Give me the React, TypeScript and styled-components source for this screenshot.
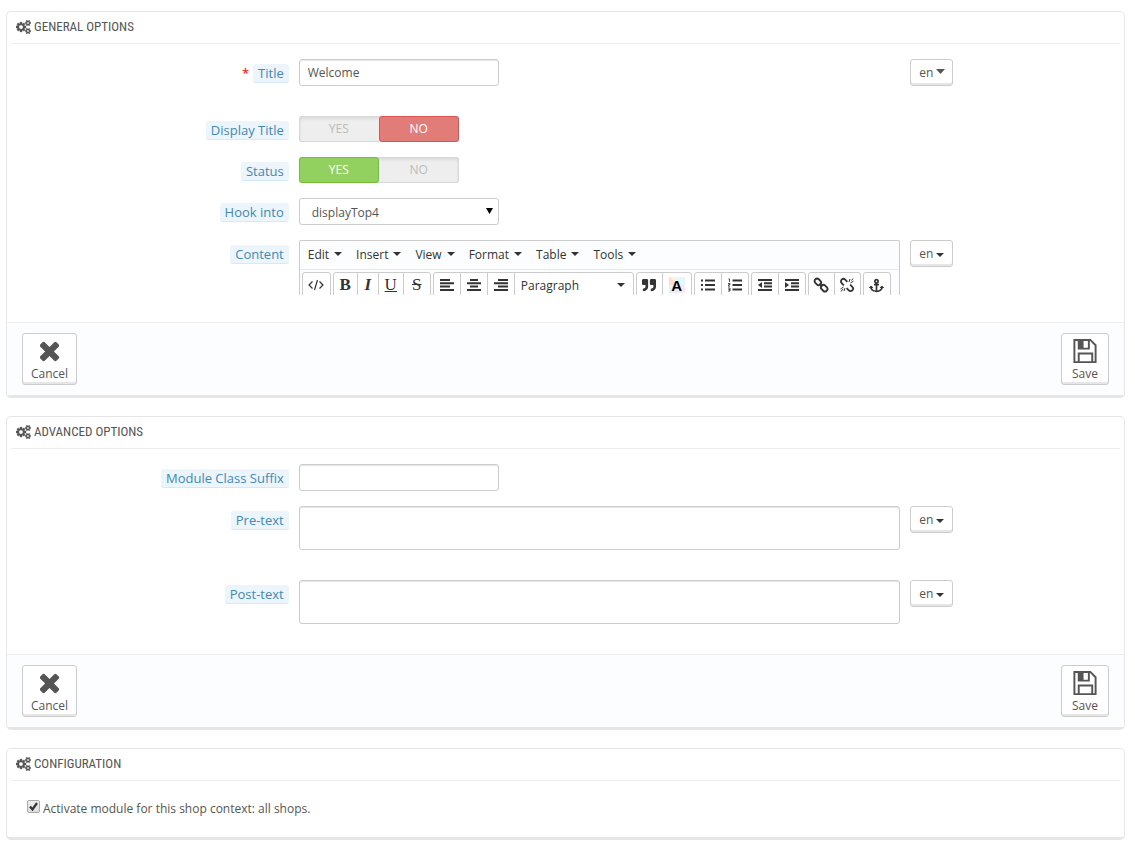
import React, { useState } from "react";
import styled, { createGlobalStyle, css } from "styled-components";
import { FaAnchor, FaQuoteRight } from "react-icons/fa";

const GlobalStyle = createGlobalStyle`
  *, *::before, *::after { box-sizing: border-box; }
  body {
    margin: 0;
    background: #fff;
    color: #555;
    font: 12px/17px "Open Sans", "Noto Sans", sans-serif;
  }
  button, input, select, textarea { font: inherit; color: inherit; margin: 0; }
`;

const Page = styled.main`
  display: flex;
  flex-direction: column;
  gap: 18px;
  padding: 11px 10px 8px 6px;
`;

const Panel = styled.section`
  border: 1px solid #e6e6e6;
  border-bottom-width: 3px;
  border-radius: 5px;
  background: #fff;
`;

const Heading = styled.h3`
  display: flex;
  align-items: center;
  gap: 3px;
  height: 32px;
  margin: 0 4px;
  padding: 0 5px 1px;
  border-bottom: 1px solid #eee;
  color: #555;
  font: 400 13px/20px "Ubuntu Condensed", "Roboto Condensed", "Liberation Sans Narrow", "Open Sans Condensed", sans-serif;
  text-transform: uppercase;
`;

const Fields = styled.div`
  display: flex;
  flex-direction: column;
  gap: 15px;
  padding: 15px 15px 0;
`;

const Row = styled.div<{ $tall?: boolean }>`
  display: grid;
  grid-template-columns: 25% 56.25% 18.75%;
  padding-bottom: ${(p) => (p.$tall ? 15 : 0)}px;
`;

const LabelCell = styled.div<{ $required?: boolean }>`
  display: flex;
  justify-content: flex-end;
  align-items: flex-start;
  gap: 4px;
  padding: 5px 5px 0 0;
  ${(p) =>
    p.$required &&
    css`
      &::before {
        content: "*";
        color: #f00;
        font-size: 13px;
        line-height: 18px;
      }
    `}
`;

const chip = css`
  padding: 0 5px;
  border-bottom: 1px solid #d3ebf7;
  border-radius: 3px;
  background: #ebf5fb;
  color: #4488b2;
  font-size: 13px;
  line-height: 18px;
`;
const Label = styled.label`
  ${chip}
`;
const LabelText = styled.span`
  ${chip}
`;

const Cell = styled.div`
  padding: 0 5px;
`;

const field = css`
  display: block;
  border: 1px solid #ccc;
  border-radius: 3px;
  background: #fff;
  color: #555;
  outline: 0;
`;

const TextInput = styled.input`
  ${field}
  width: 200px;
  height: 27px;
  padding: 0 8px;
  box-shadow: inset 0 1px 1px rgba(0, 0, 0, 0.1);
`;

const TextArea = styled.textarea`
  ${field}
  width: 100%;
  height: 44px;
  padding: 5px 8px;
  resize: none;
  box-shadow: inset 0 1px 1px rgba(0, 0, 0, 0.1);
`;

const SelectWrap = styled.div`
  position: relative;
  width: 200px;
  svg {
    position: absolute;
    right: 6px;
    top: 10px;
    pointer-events: none;
  }
`;

const Select = styled.select`
  ${field}
  appearance: none;
  width: 100%;
  height: 27px;
  padding: 2px 20px 0 12px;
`;

const Switch = styled.div`
  display: flex;
  width: 160px;
  height: 26px;
  border-radius: 3px;
  background: #eee;
  box-shadow: inset 0 0 0 1px #d8d8d8, inset 0 2px 3px 1px rgba(0, 0, 0, 0.08);
`;

const Option = styled.label<{ $tone: "on" | "off" | "idle" }>`
  position: relative;
  flex: 1;
  border: 1px solid transparent;
  border-radius: 3px;
  line-height: 24px;
  text-align: center;
  color: #bbb;
  cursor: pointer;
  ${(p) => p.$tone === "on" && "background:#92d060;border-color:#72c038;color:#fff;font-weight:500;"}
  ${(p) => p.$tone === "off" && "background:#e27c79;border-color:#d9534f;color:#fff;font-weight:500;"}
  input {
    position: absolute;
    inset: 0;
    opacity: 0;
  }
`;

const raised = css`
  border: 1px solid #ccc;
  border-radius: 3px;
  background: #fff;
  box-shadow: inset 0 -2px 0 #e6e6e6;
  color: #555;
  cursor: pointer;
`;

const LangButton = styled.button<{ $high?: boolean }>`
  ${raised}
  display: flex;
  align-items: center;
  gap: 3px;
  width: 43px;
  height: 27px;
  padding: 0 0 0 8px;
  svg {
    margin-top: ${(p) => (p.$high ? 0 : 2)}px;
    margin-bottom: ${(p) => (p.$high ? 2 : 0)}px;
  }
`;

const Footer = styled.footer<{ $gap: number }>`
  display: flex;
  justify-content: space-between;
  margin-top: ${(p) => p.$gap}px;
  padding: 10px 15px;
  border-top: 1px solid #eee;
  background: #fcfdfe;
`;

const FooterButton = styled.button`
  ${raised}
  display: flex;
  flex-direction: column;
  align-items: center;
  justify-content: space-between;
  min-width: 48px;
  height: 52px;
  padding: 4px 8px 2px 8px;
  line-height: 17px;
  svg {
    display: block;
  }
`;

const Editor = styled.div`
  height: 55px;
  margin-bottom: 2px;
  overflow: hidden;
  border: 1px solid #ccc;
  border-bottom: 0;
  border-radius: 2px 2px 0 0;
  background: #fcfdfe;
  color: #333;
`;

const MenuBar = styled.div`
  display: flex;
  height: 29px;
  border-bottom: 1px solid #e8eaee;
`;

const MenuButton = styled.button`
  display: flex;
  align-items: center;
  gap: 5px;
  padding: 0 6px 2px 8px;
  border: 0;
  background: none;
`;

const ToolBar = styled.div`
  display: flex;
  gap: 2px;
  padding: 2px;
`;

const ToolGroup = styled.div`
  display: flex;
  height: 30px;
  border: 1px solid #ccc;
  border-radius: 3px;
  background: #fff;
`;

const Tool = styled.button<{ $w: number }>`
  display: flex;
  align-items: center;
  justify-content: center;
  width: ${(p) => p.$w}px;
  height: 28px;
  padding: 0 0 4px;
  border: 0;
  background: none;
  & + & {
    border-left: 1px solid #ccc;
  }
`;

const FormatTool = styled(Tool)`
  justify-content: space-between;
  && {
    padding-left: 6px;
    padding-right: 8px;
  }
`;

const Glyph = styled.span<{ $kind: "bold" | "italic" | "underline" | "strike" }>`
  font: 17px/20px "Liberation Serif", serif;
  ${(p) => p.$kind === "bold" && "font-weight:700;"}
  ${(p) => p.$kind === "italic" && "font-style:italic;font-weight:700;"}
  ${(p) => p.$kind === "underline" && "text-decoration:underline;"}
  ${(p) => p.$kind === "strike" && "text-decoration:line-through;"}
`;

const ColorGlyph = styled.span`
  width: 16px;
  height: 16px;
  background: conic-gradient(#e3f8fc 25%, #f9e9f1 0 50%, #e6ebfb 0 62%, #e4f6e8 0 75%, #fbdcdc 0 88%, #fbf3dd 0);
  color: #000;
  font: 700 15px/18px "Liberation Sans", sans-serif;
  text-align: center;
`;

const Activation = styled.div`
  display: flex;
  align-items: flex-start;
  gap: 3px;
  height: 56px;
  padding: 19px 20px 0;
  label {
    line-height: 18px;
  }
`;

const Tick = styled.span`
  position: relative;
  width: 13px;
  height: 13px;
  input {
    display: block;
    appearance: none;
    width: 13px;
    height: 13px;
    border: 1px solid #aaa;
    border-radius: 2px;
    background: linear-gradient(#eee, #ddd);
  }
  svg {
    position: absolute;
    left: 0;
    top: 0;
    pointer-events: none;
    visibility: hidden;
  }
  input:checked + svg {
    visibility: visible;
  }
`;

const Caret = ({ w = 8, h = 4, color = "#333" }: { w?: number; h?: number; color?: string }) => (
  <svg width={w} height={h} viewBox="0 0 8 4" preserveAspectRatio="none" aria-hidden="true">
    <path d="M0 0h8L4 4z" fill={color} />
  </svg>
);

const SMALL_GEAR =
  "v140q0 16-149 31-12 27-30 52 51 113 51 138 0 4-4 7-122 71-124 71-8 0-46-47t-52-68q-20 2-30 2t-30-2q-14 21-52 68t-46 47q-2 0-124-71-4-3-4-7 0-25 51-138-18-25-30-52-149-15-149-31v-140q0-16 149-31 13-29 30-52-51-113-51-138 0-4 4-7 4-2 35-20t59-34 30-16q8 0 46 46.5t52 67.5q20-2 30-2t30 2q51-71 92-112l6-2q4 0 124 70 4 3 4 7 0 25-51 138 17 23 30 52 149 15 149 31z";

const GearsIcon = () => (
  <svg width="15" height="14" viewBox="0 0 1920 1792" fill="#555" stroke="#555" strokeWidth="40" aria-hidden="true">
    <path
      d={
        "M896 896q0-106-75-181t-181-75-181 75-75 181 75 181 181 75 181-75 75-181zm768 512q0-52-38-90t-90-38-90 38-38 90q0 53 37.5 90.5t90.5 37.5 90.5-37.5 37.5-90.5zm0-1024q0-52-38-90t-90-38-90 38-38 90q0 53 37.5 90.5t90.5 37.5 90.5-37.5 37.5-90.5zm-384 421v185q0 10-7 19.5t-16 10.5l-155 24q-11 35-32 76 34 48 90 115 7 11 7 20 0 12-7 19-23 30-82.5 89.5t-78.5 59.5q-11 0-21-7l-115-90q-37 19-77 31-11 108-23 155-7 24-30 24h-186q-11 0-20-7.5t-10-17.5l-23-153q-34-10-75-31l-118 89q-7 7-20 7-11 0-21-8-144-133-144-160 0-9 7-19 10-14 41-53t47-61q-23-44-35-82l-152-24q-10-1-17-9.5t-7-19.5v-185q0-10 7-19.5t16-10.5l155-24q11-35 32-76-34-48-90-115-7-11-7-20 0-12 7-20 22-30 82-89t79-59q11 0 21 7l115 90q34-18 77-32 11-108 23-154 7-24 30-24h186q11 0 20 7.5t10 17.5l23 153q34 10 75 31l118-89q8-7 20-7 11 0 21 8 144 133 144 160 0 8-7 19-12 16-42 54t-45 60q23 48 34 82l152 23q10 2 17 10.5t7 19.5zm640 533" +
        SMALL_GEAR +
        "m0-1024" +
        SMALL_GEAR
      }
    />
  </svg>
);

const CrossIcon = () => (
  <svg width="20" height="28" viewBox="140 128 1188 1664" fill="#555" aria-hidden="true">
    <path d="M1298 1322q0 40-28 68l-136 136q-28 28-68 28t-68-28l-294-294-294 294q-28 28-68 28t-68-28l-136-136q-28-28-28-68t28-68l294-294-294-294q-28-28-28-68t28-68l136-136q28-28 68-28t68 28l294 294 294-294q28-28 68-28t68 28l136 136q28 28 28 68t-28 68l-294 294 294 294q28 28 28 68z" />
  </svg>
);

const SaveIcon = () => (
  <svg width="26" height="28" viewBox="0 0 26 28" fill="none" stroke="#555" strokeWidth="2" aria-hidden="true">
    <path d="M2 2h16.5l5.5 5.5V25H2z" />
    <path d="M6.5 2v9h10.5V2M6.5 25v-9h14v9" />
    <path d="M6 2h5.5v9H6z" fill="#555" stroke="none" />
  </svg>
);

const ICON_PATHS: Record<string, React.ReactNode> = {
  code: <path d="M4.5 4.5L1 8l3.5 3.5M11.5 4.5L15 8l-3.5 3.5M9.5 3l-3 10" strokeWidth="1.2" />,
  left: <path d="M1 3h10M1 6.3h14M1 9.6h10M1 12.9h14" strokeWidth="2" />,
  center: <path d="M4 3h8M1 6.3h14M4 9.6h8M1 12.9h14" strokeWidth="2" />,
  right: <path d="M5 3h10M1 6.3h14M5 9.6h10M1 12.9h14" strokeWidth="2" />,
  bullets: <path d="M1 3.5h2M1 8h2M1 12.5h2M5 3.5h10M5 8h10M5 12.5h10" strokeWidth="2" />,
  numbers: (
    <>
      <path d="M5.5 3.5H15M5.5 8H15M5.5 12.5H15" strokeWidth="2" />
      <path d="M1.5 2h1v3M1 6.5h2v1.3H1.5v1.4H3M1 11h2v3H1M1.5 12.5H3" strokeWidth="0.9" />
    </>
  ),
  outdent: (
    <>
      <path d="M1 3h14M7 6.3h8M7 9.6h8M1 12.9h14" strokeWidth="2" />
      <path d="M5 5v6L1 8z" stroke="none" fill="currentColor" />
    </>
  ),
  indent: (
    <>
      <path d="M1 3h14M7 6.3h8M7 9.6h8M1 12.9h14" strokeWidth="2" />
      <path d="M1 5v6l4-3z" stroke="none" fill="currentColor" />
    </>
  ),
  link: (
    <g transform="rotate(45 8 8)" strokeWidth="1.9">
      <rect x="0" y="5.5" width="7" height="5" rx="2.4" />
      <rect x="9" y="5.5" width="7" height="5" rx="2.4" />
      <path d="M6 8h4" />
    </g>
  ),
  unlink: (
    <>
      <g transform="rotate(45 8 8)" strokeWidth="1.8">
        <path d="M6 5.5H3a2.5 2.5 0 0 0 0 5h3M10 5.5h3a2.5 2.5 0 0 1 0 5h-3" />
      </g>
      <path d="M10 5l1-3M11.5 6l3-2M1.5 12l3-2M5 14l1-3M12.5 3.5l1.5-2M2 14.5L4 12" strokeWidth="1" />
    </>
  ),
};

const ToolIcon = ({ name }: { name: string }) => (
  <svg width="16" height="16" viewBox="0 0 16 16" fill="none" stroke="currentColor" aria-hidden="true">
    {ICON_PATHS[name]}
  </svg>
);

const PanelTitle = ({ children }: { children: React.ReactNode }) => (
  <Heading>
    <GearsIcon />
    {children}
  </Heading>
);

const Language = ({ high }: { high?: boolean }) => (
  <Cell>
    <LangButton type="button" $high={high}>
      en
      {high ? <Caret w={9} h={5} color="#555" /> : <Caret />}
    </LangButton>
  </Cell>
);

const YesNo = ({ name, initial }: { name: string; initial: boolean }) => {
  const [value, setValue] = useState(initial);
  return (
    <Switch role="radiogroup" aria-labelledby={`${name}-label`}>
      <Option $tone={value ? "on" : "idle"}>
        <input type="radio" name={name} checked={value} onChange={() => setValue(true)} />
        YES
      </Option>
      <Option $tone={value ? "idle" : "off"}>
        <input type="radio" name={name} checked={!value} onChange={() => setValue(false)} />
        NO
      </Option>
    </Switch>
  );
};

const Actions = ({ gap }: { gap: number }) => (
  <Footer $gap={gap}>
    <FooterButton type="button">
      <CrossIcon />
      Cancel
    </FooterButton>
    <FooterButton type="submit">
      <SaveIcon />
      Save
    </FooterButton>
  </Footer>
);

const IconTool = ({ name, w }: { name: string; w: number }) => (
  <Tool type="button" $w={w} aria-label={name}>
    <ToolIcon name={name} />
  </Tool>
);

const ContentEditor = () => (
  <Editor role="group" aria-labelledby="content-label">
    <MenuBar>
      {["Edit", "Insert", "View", "Format", "Table", "Tools"].map((item) => (
        <MenuButton type="button" key={item}>
          {item}
          <Caret />
        </MenuButton>
      ))}
    </MenuBar>
    <ToolBar>
      <ToolGroup>
        <IconTool name="code" w={27} />
      </ToolGroup>
      <ToolGroup>
        <Tool type="button" $w={23}><Glyph $kind="bold">B</Glyph></Tool>
        <Tool type="button" $w={21}><Glyph $kind="italic">I</Glyph></Tool>
        <Tool type="button" $w={25}><Glyph $kind="underline">U</Glyph></Tool>
        <Tool type="button" $w={27}><Glyph $kind="strike">S</Glyph></Tool>
      </ToolGroup>
      <ToolGroup>
        <IconTool name="left" w={26} />
        <IconTool name="center" w={27} />
        <IconTool name="right" w={27} />
        <FormatTool type="button" $w={119}>
          Paragraph
          <Caret />
        </FormatTool>
      </ToolGroup>
      <ToolGroup>
        <Tool type="button" $w={25} aria-label="Blockquote"><FaQuoteRight size={14} /></Tool>
        <Tool type="button" $w={29}><ColorGlyph>A</ColorGlyph></Tool>
      </ToolGroup>
      <ToolGroup>
        <IconTool name="bullets" w={26} />
        <IconTool name="numbers" w={27} />
      </ToolGroup>
      <ToolGroup>
        <IconTool name="outdent" w={26} />
        <IconTool name="indent" w={27} />
      </ToolGroup>
      <ToolGroup>
        <IconTool name="link" w={25} />
        <IconTool name="unlink" w={26} />
      </ToolGroup>
      <ToolGroup>
        <Tool type="button" $w={26} aria-label="Anchor"><FaAnchor size={15} /></Tool>
      </ToolGroup>
    </ToolBar>
  </Editor>
);

export default function App() {
  return (
    <>
      <GlobalStyle />
      <Page>
        <Panel>
          <PanelTitle>General options</PanelTitle>
          <Fields>
            <Row $tall>
              <LabelCell $required>
                <Label htmlFor="title">Title</Label>
              </LabelCell>
              <Cell><TextInput id="title" type="text" defaultValue="Welcome" /></Cell>
              <Language high />
            </Row>
            <Row>
              <LabelCell><LabelText id="display-title-label">Display Title</LabelText></LabelCell>
              <Cell><YesNo name="display-title" initial={false} /></Cell>
            </Row>
            <Row>
              <LabelCell><LabelText id="status-label">Status</LabelText></LabelCell>
              <Cell><YesNo name="status" initial /></Cell>
            </Row>
            <Row>
              <LabelCell><Label htmlFor="hook">Hook into</Label></LabelCell>
              <Cell>
                <SelectWrap>
                  <Select id="hook" defaultValue="displayTop4">
                    <option>displayTop4</option>
                  </Select>
                  <Caret w={7} h={6} color="#000" />
                </SelectWrap>
              </Cell>
            </Row>
            <Row>
              <LabelCell><LabelText id="content-label">Content</LabelText></LabelCell>
              <Cell><ContentEditor /></Cell>
              <Language />
            </Row>
          </Fields>
          <Actions gap={25} />
        </Panel>

        <Panel>
          <PanelTitle>Advanced options</PanelTitle>
          <Fields>
            <Row>
              <LabelCell><Label htmlFor="suffix">Module Class Suffix</Label></LabelCell>
              <Cell><TextInput id="suffix" type="text" /></Cell>
            </Row>
            <Row $tall>
              <LabelCell><Label htmlFor="pretext">Pre-text</Label></LabelCell>
              <Cell><TextArea id="pretext" /></Cell>
              <Language />
            </Row>
            <Row>
              <LabelCell><Label htmlFor="posttext">Post-text</Label></LabelCell>
              <Cell><TextArea id="posttext" /></Cell>
              <Language />
            </Row>
          </Fields>
          <Actions gap={30} />
        </Panel>

        <Panel>
          <PanelTitle>Configuration</PanelTitle>
          <Activation>
            <Tick>
              <input id="activate" type="checkbox" defaultChecked />
              <svg width="13" height="13" viewBox="0 0 13 13" aria-hidden="true">
                <path d="M3 6.5l2.5 3L10 3" fill="none" stroke="#333" strokeWidth="2.2" />
              </svg>
            </Tick>
            <label htmlFor="activate">Activate module for this shop context: all shops.</label>
          </Activation>
        </Panel>
      </Page>
    </>
  );
}
